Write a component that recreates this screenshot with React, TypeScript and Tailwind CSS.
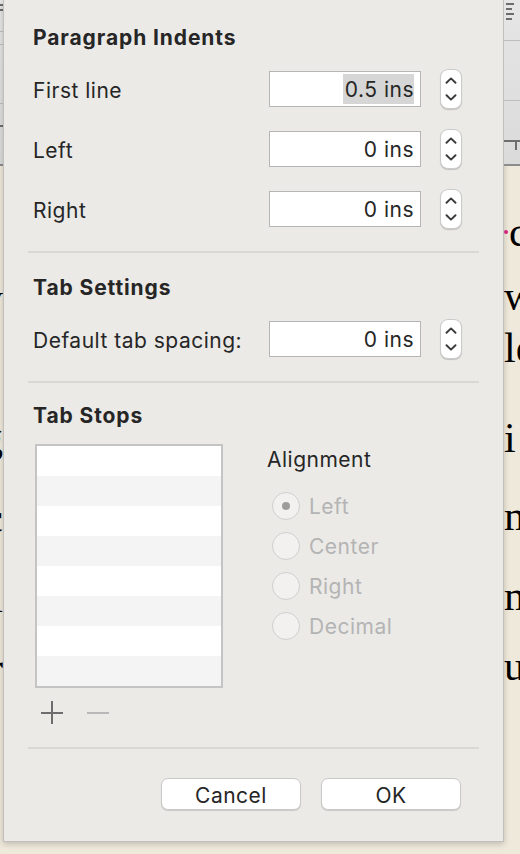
import React from 'react';

const Chevron = ({ down }: { down?: boolean }) => (
  <svg width="12" height="7" viewBox="0 0 12 7">
    <path
      d={down ? 'M1.5 1.2 L6 5.6 L10.5 1.2' : 'M1.5 5.8 L6 1.4 L10.5 5.8'}
      fill="none"
      stroke="#3a3a3a"
      strokeWidth="1.9"
      strokeLinecap="round"
      strokeLinejoin="round"
    />
  </svg>
);

const Stepper = () => (
  <div className="w-[22px] h-[40px] rounded-[8px] bg-white border border-[#cbcbcb] shadow-[0_1px_1px_rgba(0,0,0,0.18)] flex flex-col items-center justify-center gap-[10px]">
    <Chevron />
    <Chevron down />
  </div>
);

const Field = ({ value, selected }: { value: string; selected?: boolean }) => (
  <div className="w-[152px] h-[36px] bg-white border border-[#b5b5b5] flex items-center justify-end pr-[6px] text-[21px] tracking-[0.5px] text-[#262626]">
    <span className={selected ? 'bg-[#d6d6d6] pl-[2px] pt-[2px] leading-[28px]' : 'pt-[2px] leading-[28px]'}>{value}</span>
  </div>
);

const Row = ({ label, value, selected, first }: { label: string; value: string; selected?: boolean; first?: boolean }) => (
  <div className={`flex items-center h-[36px] ${first ? 'mt-[21px]' : 'mt-[24px]'}`}>
    <div className="w-[241px] pl-[5px] pt-[3px] text-[21px] tracking-[0.5px] text-[#262626]">{label}</div>
    <Field value={value} selected={selected} />
    <div className="ml-[19px]">
      <Stepper />
    </div>
  </div>
);

const Heading = ({ children, className }: { children: React.ReactNode; className: string }) => (
  <div className={`h-[28px] leading-[28px] pl-[5px] pt-[2px] text-[21px] tracking-[0.9px] font-bold text-[#262626] ${className}`}>
    {children}
  </div>
);

const Divider = ({ className }: { className: string }) => <div className={`h-[2px] bg-[#d9d8d5] ${className}`} />;

const Radio = ({ label, checked }: { label: string; checked?: boolean }) => (
  <div className="h-[40px] flex items-center pl-[5px]">
    <div className="w-[28px] h-[28px] rounded-full border border-[#cfcfcf] bg-[#f2f1ef] flex items-center justify-center">
      {checked && <div className="w-[8px] h-[8px] rounded-full bg-[#9c9c9c]" />}
    </div>
    <span className="ml-[9px] pt-[2px] text-[21px] tracking-[0.5px] text-[#b4b4b4]">{label}</span>
  </div>
);

const stops = [0, 1, 2, 3, 4, 5, 6, 7];

const Ruler = ({ right }: { right?: boolean }) => (
  <div className="h-[166px] bg-gradient-to-b from-[#e6e6e6] to-[#dadada] border-b-2 border-[#8c8c8c] flex flex-col">
    {right ? (
      <>
        <div className="flex flex-col gap-[3px] pt-[3px] pl-[2px]">
          <div className="w-[8px] h-[2px] bg-[#6c6c6c]" />
          <div className="w-[6px] h-[2px] bg-[#6c6c6c]" />
          <div className="w-[8px] h-[2px] bg-[#6c6c6c]" />
          <div className="w-[6px] h-[2px] bg-[#6c6c6c]" />
        </div>
        <div className="mt-[20px] h-[1px] bg-[#bdbdbd]" />
        <div className="mt-[59px] h-[1px] bg-[#bdbdbd]" />
        <div className="mt-[39px] h-[2px] bg-[#6e6e6e]" />
        <div className="ml-[11px] w-[2px] h-[8px] bg-[#6e6e6e]" />
      </>
    ) : (
      <>
        <div className="mt-[4px] h-[2px] bg-[#6c6c6c]" />
        <div className="mt-[3px] h-[2px] bg-[#6c6c6c]" />
        <div className="mt-[20px] h-[1px] bg-[#bdbdbd]" />
        <div className="mt-[12px] h-[1px] bg-[#bdbdbd]" />
        <div className="mt-[58px] h-[1px] bg-[#bdbdbd]" />
        <div className="mt-[21px] h-[2px] bg-[#6e6e6e]" />
      </>
    )}
  </div>
);

export default function App() {
  return (
    <div className="w-[520px] h-[854px] bg-[#efe9db] flex overflow-hidden font-[Inter,'Liberation_Sans',sans-serif]">
      {/* left edge of the document */}
      <div className="w-[3px] shrink-0 flex flex-col overflow-hidden font-['Liberation_Serif',serif] text-[42px] text-black">
        <Ruler />
        <div className="h-[112px]" />
        <div className="h-[40px] leading-[40px] flex justify-end whitespace-nowrap">y</div>
        <div className="h-[100px]" />
        <div className="h-[40px] leading-[40px] flex justify-end whitespace-nowrap">g</div>
        <div className="h-[40px]" />
        <div className="h-[40px] leading-[40px] flex justify-end whitespace-nowrap">c</div>
        <div className="h-[40px]" />
        <div className="h-[40px] leading-[40px] flex justify-end whitespace-nowrap">i</div>
        <div className="h-[30px]" />
        <div className="h-[40px] leading-[40px] flex justify-end whitespace-nowrap">r</div>
      </div>

      {/* dialog */}
      <div className="w-[501px] h-[842px] shrink-0 bg-[#ebeae7] border-l border-r border-b border-[#c2c0ba] shadow-[0_2px_6px_rgba(0,0,0,0.2)] px-[24px] flex flex-col">
        <Heading className="mt-[22px]">Paragraph Indents</Heading>
        <Row first label="First line" value="0.5 ins" selected />
        <Row label="Left" value="0 ins" />
        <Row label="Right" value="0 ins" />
        <Divider className="mt-[24px]" />

        <Heading className="mt-[19px]">Tab Settings</Heading>
        <Row first label="Default tab spacing:" value="0 ins" />
        <Divider className="mt-[24px]" />

        <Heading className="mt-[17px]">Tab Stops</Heading>
        <div className="mt-[16px] flex pl-[7px]">
          <div className="w-[188px] border-2 border-[#c4c4c4] flex flex-col">
            {stops.map((i) => (
              <div key={i} className={`h-[30px] ${i % 2 === 0 ? 'bg-white' : 'bg-[#f3f4f3]'}`} />
            ))}
          </div>
          <div className="ml-[44px] flex flex-col">
            <div className="h-[28px] leading-[28px] pt-[2px] text-[21px] tracking-[0.5px] text-[#262626]">Alignment</div>
            <div className="mt-[14px] flex flex-col">
              <Radio label="Left" checked />
              <Radio label="Center" />
              <Radio label="Right" />
              <Radio label="Decimal" />
            </div>
          </div>
        </div>

        <div className="mt-[13px] h-[24px] flex items-center pl-[13px] gap-[24px]">
          <svg width="22" height="24" viewBox="0 0 22 24">
            <path d="M11 0 V23 M0 12 H22" stroke="#6d6d6d" strokeWidth="2" />
          </svg>
          <svg width="22" height="24" viewBox="0 0 22 24">
            <path d="M0 12 H22" stroke="#b8b8b8" strokeWidth="2" />
          </svg>
        </div>
        <Divider className="mt-[22px]" />

        <div className="mt-[29px] flex justify-end gap-[20px] pr-[18px]">
          <button className="w-[140px] h-[32px] pt-[1px] rounded-[7px] bg-white border border-[#c9c9c9] shadow-[0_1px_1px_rgba(0,0,0,0.14)] text-[21px] tracking-[0.5px] text-[#262626]">
            Cancel
          </button>
          <button className="w-[140px] h-[32px] pt-[1px] rounded-[7px] bg-white border border-[#c9c9c9] shadow-[0_1px_1px_rgba(0,0,0,0.14)] text-[21px] tracking-[0.5px] text-[#262626]">
            OK
          </button>
        </div>
      </div>

      {/* right edge of the document */}
      <div className="w-[16px] shrink-0 flex flex-col overflow-hidden font-['Liberation_Serif',serif] text-[42px] text-black">
        <Ruler right />
        <div className="h-[46px]" />
        <div className="h-[40px] leading-[40px] flex items-center whitespace-nowrap">
          <span className="w-[4px] h-[4px] rounded-full bg-[#d1247a] mr-[1px] shrink-0" />
          <span>c</span>
        </div>
        <div className="h-[24px]" />
        <div className="h-[40px] leading-[40px] whitespace-nowrap">w</div>
        <div className="h-[12px]" />
        <div className="h-[40px] leading-[40px] whitespace-nowrap">le</div>
        <div className="h-[50px]" />
        <div className="h-[40px] leading-[40px] whitespace-nowrap">i</div>
        <div className="h-[38px]" />
        <div className="h-[40px] leading-[40px] whitespace-nowrap">m</div>
        <div className="h-[40px]" />
        <div className="h-[40px] leading-[40px] whitespace-nowrap">m</div>
        <div className="h-[30px]" />
        <div className="h-[40px] leading-[40px] whitespace-nowrap">u</div>
      </div>
    </div>
  );
}
